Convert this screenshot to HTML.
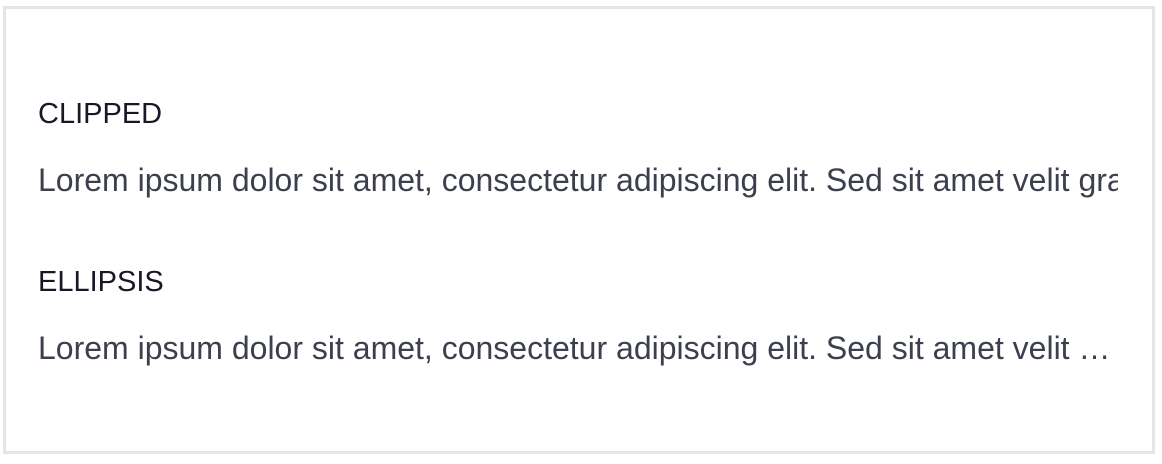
<!DOCTYPE html>
<html><head><style>
html,body{margin:0;padding:0;background:#fff;width:1162px;height:464px;overflow:hidden}
.box{position:absolute;left:3px;top:6px;width:1146px;height:442px;border:3px solid #e5e5e7;background:#fff}
.t{position:absolute;left:38px;font-family:"Liberation Sans",sans-serif;white-space:nowrap;overflow:hidden}
.h{font-size:29px;color:#161827}
.p{font-size:32px;color:#3c3f4e;width:1080px}
</style></head><body>
<div class="box"></div>
<div class="t h" style="top:98px">CLIPPED</div>
<div class="t p" style="top:162px;text-overflow:clip">Lorem ipsum dolor sit amet, consectetur adipiscing elit. Sed sit amet velit gravida, tincidunt nisi</div>
<div class="t h" style="top:266px">ELLIPSIS</div>
<div class="t p" style="top:330px;text-overflow:ellipsis">Lorem ipsum dolor sit amet, consectetur adipiscing elit. Sed sit amet velit gravida, tincidunt nisi</div>
</body></html>
